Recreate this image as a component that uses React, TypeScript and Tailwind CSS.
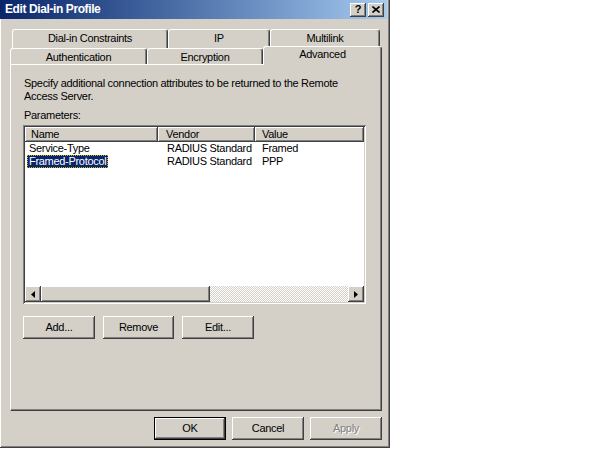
import React from 'react';

// Win2000 bevels
const RAISED =
  'shadow-[inset_-1px_-1px_#404040,inset_1px_1px_#ffffff,inset_-2px_-2px_#808080]';
const SUNKEN =
  'shadow-[inset_1px_1px_#808080,inset_-1px_-1px_#ffffff,inset_2px_2px_#404040,inset_-2px_-2px_#d4d0c8]';

interface TabProps {
  label: string;
  width: string;
  selected?: boolean;
}

const Tab = ({ label, width, selected }: TabProps) => (
  <div
    className={`${width} ${
      selected ? 'h-[19px] -mb-[1px] relative z-10 pb-[3px]' : 'h-[16px] pt-[1px]'
    } flex items-center justify-center bg-[#d4d0c8] border-t border-l border-white border-r border-r-[#404040] rounded-t-[3px] shadow-[inset_-1px_0_#808080]`}
  >
    {label}
  </div>
);

const BackTab = ({ label, width }: TabProps) => (
  <div
    className={`${width} h-[19px] pb-[2px] flex items-center justify-center bg-[#d4d0c8] border-t border-l border-white border-r border-r-[#404040] rounded-t-[3px] shadow-[inset_-1px_0_#808080]`}
  >
    {label}
  </div>
);

interface BtnProps {
  label: string;
  width?: string;
  isDefault?: boolean;
  disabled?: boolean;
}

const Btn = ({ label, width = 'w-[72px]', isDefault, disabled }: BtnProps) => (
  <div
    className={`${width} h-[23px] ${isDefault ? 'border border-black' : ''} flex`}
  >
    <div
      className={`flex-1 flex items-center justify-center bg-[#d4d0c8] ${RAISED} ${
        disabled ? 'text-[#808080] [text-shadow:1px_1px_0_#ffffff]' : ''
      }`}
    >
      {label}
    </div>
  </div>
);

const Arrow = ({ dir }: { dir: 'left' | 'right' }) => (
  <div className={`w-[16px] h-full flex items-center justify-center bg-[#d4d0c8] ${RAISED}`}>
    <svg width="4" height="7" viewBox="0 0 4 7" className="block">
      {dir === 'left' ? (
        <path d="M4 0 L0 3.5 L4 7 Z" fill="#000" />
      ) : (
        <path d="M0 0 L4 3.5 L0 7 Z" fill="#000" />
      )}
    </svg>
  </div>
);

const rows = [
  { name: 'Service-Type', vendor: 'RADIUS Standard', value: 'Framed' },
  { name: 'Framed-Protocol', vendor: 'RADIUS Standard', value: 'PPP', selected: true },
];

export default function App() {
  return (
    <div className="w-[616px] h-[450px] bg-white text-black text-[11px] leading-[13px] tracking-[-0.3px] whitespace-nowrap font-['Liberation_Sans',Arial,sans-serif]">
      <div className="w-[390px] h-[448px] bg-[#d4d0c8] flex flex-col shadow-[inset_-1px_-1px_#404040,inset_1px_0_#ffffff,inset_-2px_-2px_#808080]">
        {/* title bar */}
        <div className="h-[19px] mr-[3px] flex items-center pl-[5px] pr-[3px] bg-linear-to-r from-[#0a246a] to-[#a6caf0]">
          <span className="flex-1 text-white font-bold text-[12px] tracking-[-0.4px]">Edit Dial-in Profile</span>
          <div className="flex gap-[2px]">
            <div className={`w-[16px] h-[14px] bg-[#d4d0c8] ${RAISED} flex items-center justify-center font-bold text-[11px] leading-none`}>
              ?
            </div>
            <div className={`w-[16px] h-[14px] bg-[#d4d0c8] ${RAISED} flex items-center justify-center`}>
              <svg width="8" height="7" viewBox="0 0 8 7" className="block">
                <path d="M0.5 0.5 L7.5 6.5 M7.5 0.5 L0.5 6.5" stroke="#000" strokeWidth="1.6" />
              </svg>
            </div>
          </div>
        </div>

        {/* tabs + panel */}
        <div className="pl-[10px] mt-[10px] flex flex-col w-[382px]">
          <div className="flex pl-[2px]">
            <BackTab label="Dial-in Constraints" width="w-[156px]" />
            <BackTab label="IP" width="w-[102px]" />
            <BackTab label="Multilink" width="w-[110px]" />
          </div>
          <div className="flex items-end h-[18px] -mt-[2px]">
            <Tab label="Authentication" width="w-[137px]" />
            <Tab label="Encryption" width="w-[116px]" />
            <Tab label="Advanced" width="w-[119px]" selected />
          </div>

          <div className="h-[347px] border-t border-l border-white border-r border-b border-r-[#404040] border-b-[#404040] shadow-[inset_-1px_-1px_#808080] pl-[12px] pt-[12px] flex flex-col">
            <p className="pl-[1px]">
              Specify additional connection attributes to be returned to the Remote
              <br />
              Access Server.
            </p>
            <p className="pl-[1px] mt-[6px]">Parameters:</p>

            {/* list view */}
            <div className={`mt-[3px] w-[343px] h-[179px] bg-white p-[2px] flex flex-col ${SUNKEN}`}>
              <div className="flex h-[15px] bg-[#d4d0c8]">
                <div className={`w-[133px] pl-[6px] flex items-center ${RAISED}`}>Name</div>
                <div className={`w-[97px] pl-[8px] flex items-center ${RAISED}`}>Vendor</div>
                <div className={`flex-1 pl-[7px] flex items-center ${RAISED}`}>Value</div>
              </div>
              <div className="flex-1">
                {rows.map((r) => (
                  <div key={r.name} className="flex h-[13px] items-center">
                    <div className="w-[133px] pl-[2px]">
                      <span
                        className={`inline-block px-[2px] ${
                          r.selected
                            ? 'bg-[#0a246a] text-white outline outline-dotted outline-[#c0c000] -outline-offset-1'
                            : ''
                        }`}
                      >
                        {r.name}
                      </span>
                    </div>
                    <div className="w-[97px] pl-[9px]">{r.vendor}</div>
                    <div className="flex-1 pl-[7px]">{r.value}</div>
                  </div>
                ))}
              </div>
              {/* horizontal scrollbar */}
              <div className="h-[16px] flex">
                <Arrow dir="left" />
                <div className={`w-[169px] h-full bg-[#d4d0c8] ${RAISED}`} />
                <div className="flex-1 h-full bg-[repeating-conic-gradient(#d4d0c8_0_25%,#ffffff_0_50%)] bg-[length:2px_2px]" />
                <Arrow dir="right" />
              </div>
            </div>

            <div className="flex gap-[8px] mt-[12px]">
              <Btn label="Add..." />
              <Btn label="Remove" width="w-[71px]" />
              <Btn label="Edit..." />
            </div>
          </div>
        </div>

        {/* dialog buttons */}
        <div className="flex justify-end gap-[6px] pr-[8px] mt-[6px]">
          <Btn label="OK" isDefault />
          <Btn label="Cancel" />
          <Btn label="Apply" disabled />
        </div>
      </div>
    </div>
  );
}
